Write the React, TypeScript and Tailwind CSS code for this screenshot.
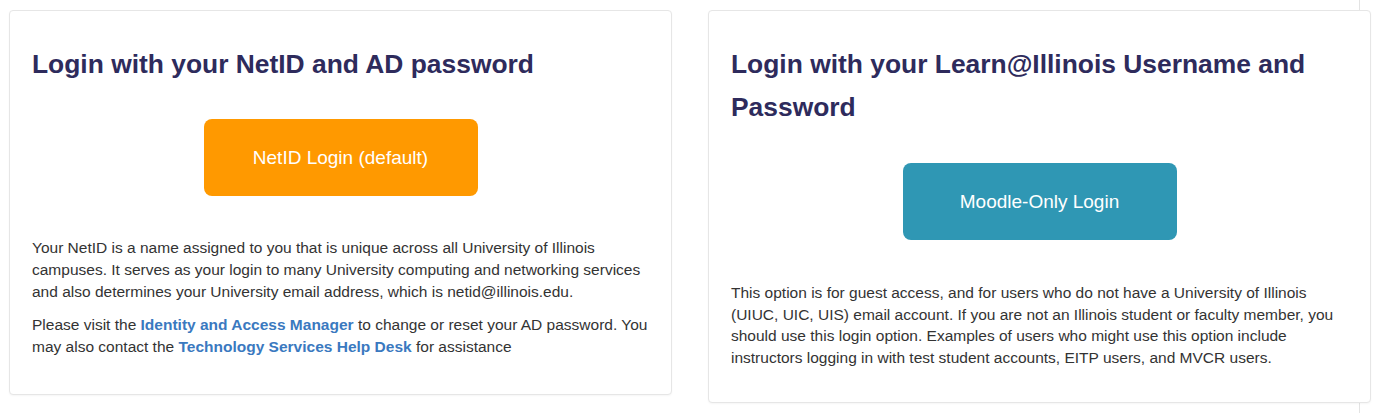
export default function App() {
  return (
    <div className="min-h-[413px] bg-white font-['Liberation_Sans',Arial,sans-serif] text-[15.5px] leading-[22px] text-[#333]">
      <div className="w-[1360px] min-h-[413px] border-r border-[#e3e3e3] pt-[10px] pl-[9px]">
        <div className="-mr-[12px] flex items-start gap-[36px]">
          <div className="w-[663px] rounded-[4px] border border-[#e6e6e6] bg-white pl-[22px] pr-[16px] pt-[22px] pb-[36px] shadow-[0_1px_2px_rgba(0,0,0,0.04)]">
            <h2 className="mt-[10px] text-[26.4px] font-bold leading-[43px] text-[#2e2b5c]">
              Login with your NetID and AD password
            </h2>
            <div className="mt-[33px] flex justify-center pr-[6px]">
              <button className="h-[77px] w-[274px] rounded-[8px] bg-[#ff9900] text-[19px] text-white">
                NetID Login (default)
              </button>
            </div>
            <p className="mt-[41px]">
              Your NetID is a name assigned to you that is unique across all University of Illinois campuses. It serves as your login to many University computing and networking services and also determines your University email address, which is netid@illinois.edu.
            </p>
            <p className="mt-[11px]">
              Please visit the{' '}
              <a href="#" className="font-bold text-[#3a79c0]">Identity and Access Manager</a>{' '}
              to change or reset your AD password. You may also contact the{' '}
              <a href="#" className="font-bold text-[#3a79c0]">Technology Services Help Desk</a>{' '}
              for assistance
            </p>
          </div>
          <div className="w-[663px] rounded-[4px] border border-[#e6e6e6] bg-white pl-[22px] pr-[16px] pt-[22px] pb-[22px] shadow-[0_1px_2px_rgba(0,0,0,0.04)]">
            <h2 className="mt-[10px] text-[26.4px] font-bold leading-[43px] text-[#2e2b5c]">
              Login with your Learn@Illinois Username and Password
            </h2>
            <div className="mt-[34px] flex justify-center pr-[6px]">
              <button className="h-[77px] w-[274px] rounded-[8px] bg-[#2f97b4] text-[19px] text-white">
                Moodle-Only Login
              </button>
            </div>
            <p className="mt-[42px] mb-[11px] leading-[21.7px]">
              This option is for guest access, and for users who do not have a University of Illinois (UIUC, UIC, UIS) email account. If you are not an Illinois student or faculty member, you should use this login option. Examples of users who might use this option include instructors logging in with test student accounts, EITP users, and MVCR users.
            </p>
          </div>
        </div>
      </div>
    </div>
  );
}
